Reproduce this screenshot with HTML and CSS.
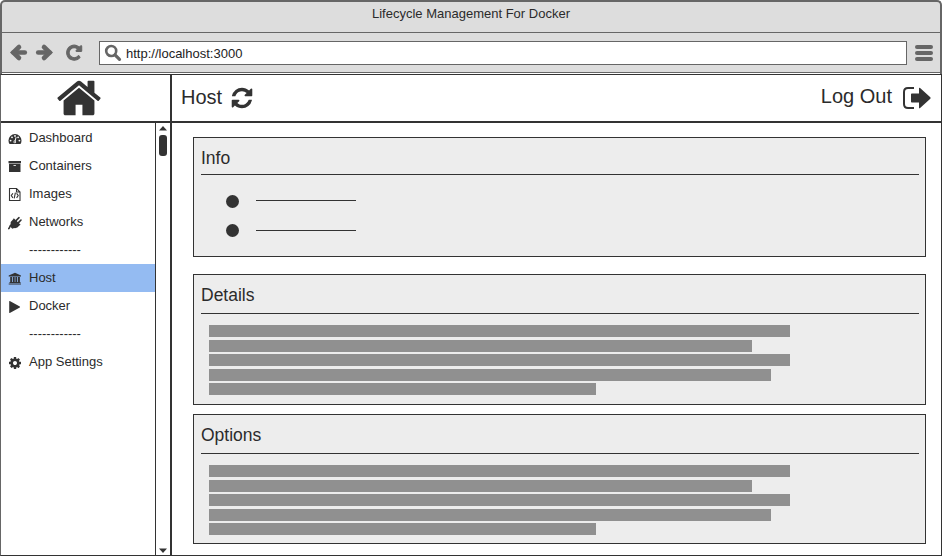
FILE: index.html
```html
<!DOCTYPE html>
<html lang="en">
<head>
<meta charset="utf-8">
<title>Lifecycle Management For Docker</title>
<link rel="stylesheet" href="styles.css">
</head>
<body>
<div class="window">
  <div class="chrome">
    <div class="titlebar">Lifecycle Management For Docker</div>
    <div class="toolbar">
      <svg class="nav-icons" width="90" height="24" viewBox="0 0 90 24">
        <g fill="none" stroke="#666" stroke-width="4.600">
          <path d="M11.500 11.500H22.800" stroke-linecap="round"/>
          <path d="M17 6L11.300 11.500L17 17" stroke-linecap="round"/>
          <path d="M36.200 11.500H47.500" stroke-linecap="round"/>
          <path d="M42 6L47.700 11.500L42 17" stroke-linecap="round"/>
        </g>
        <path transform="translate(63.4 2.9) scale(.0098)" fill="#666" stroke="#666" stroke-width="110" d="M1664 256v448q0 26-19 45t-45 19h-448q-42 0-59-40-17-39 14-69l138-138q-148-137-349-137-104 0-198.500 40.500t-163.500 109.500-109.500 163.500-40.500 198.500 40.500 198.500 109.500 163.500 163.500 109.500 198.500 40.500q119 0 225-52t179-147q7-10 23-12 15 0 25 9l137 138q9 8 9.500 20.500t-7.500 22.500q-109 132-264 204.500t-327 72.500q-156 0-298-61t-245-164-164-245-61-298 61-298 164-245 245-164 298-61q147 0 284.500 55.500t244.500 156.500l130-129q29-31 70-14 39 17 39 59z"/>
      </svg>
      <div class="address">
        <svg width="18" height="18" viewBox="0 0 18 18"><circle cx="7.200" cy="7" r="5" fill="none" stroke="#666" stroke-width="2.600"/><path d="M11 10.800L15.500 15.300" stroke="#666" stroke-width="3.200" stroke-linecap="round"/></svg>
        <span>http://localhost:3000</span>
      </div>
      <div class="burger"><i></i><i></i><i></i></div>
    </div>
  </div>
  <div class="app">
    <div class="side">
      <div class="logo">
        <svg width="48" height="48" viewBox="0 0 1792 1792"><path fill="#333" d="M1472 992v480q0 26-19 45t-45 19h-384v-384h-256v384h-384q-26 0-45-19t-19-45v-480q0-1 .5-3t.5-3l575-474 575 474q1 2 1 6zm223-69l-62 74q-8 9-21 11h-3q-13 0-21-7l-692-577-692 577q-12 8-24 7-13-2-21-11l-62-74q-8-10-7-23.500t11-21.500l719-599q32-26 76-26t76 26l244 204v-195q0-14 9-23t23-9h192q14 0 23 9t9 23v408l219 182q10 8 11 21.500t-7 23.500z"/></svg>
      </div>
      <div class="side-body">
        <ul class="menu">
          <li><svg width="14" height="14" viewBox="0 0 14 14"><path fill="#333" d="M.5 8.500a6.500 6.500 0 0 1 13 0q0 2-1 3.500h-11q-1-1.500-1-3.500z"/><g fill="#fff"><circle cx="2.600" cy="8.600" r=".9"/><circle cx="4" cy="5.300" r=".9"/><circle cx="7" cy="3.900" r=".9"/><circle cx="10.100" cy="5.300" r=".9"/><circle cx="11.400" cy="8.600" r=".9"/></g><path d="M6.800 9.800L8.100 5.200" stroke="#fff" stroke-width="1"/><circle cx="6.800" cy="9.900" r="1.300" fill="#fff"/><circle cx="6.800" cy="9.900" r=".6" fill="#333"/></svg>Dashboard</li>
          <li><svg width="14" height="14" viewBox="0 0 14 14"><path fill="#333" d="M.5 1h12.500v2.300H.5zM1 3.800h11.500v8.200H1z"/><path d="M5.500 5.500h2.400" stroke="#ddd" stroke-width="1"/></svg>Containers</li>
          <li><svg width="14" height="14" viewBox="0 0 14 14"><path fill="none" stroke="#333" d="M1.500 .5h7l3.500 3.500v8.500H1.500zM8.500 .5v3.500H12M4.900 5.300L3.300 7.600l1.600 2.300M8.600 5.300l1.600 2.300-1.600 2.300M7.400 4.600l-1.200 5.800" stroke-width="1.100"/></svg>Images</li>
          <li><svg width="14" height="14" viewBox="0 0 14 14"><g fill="none" stroke="#333" stroke-linecap="round"><path d="M8.300 4.300L11 1.700M10.500 6.600L13 4" stroke-width="1.600"/><path d="M4.500 9.200Q2.500 8.500 2 10.200T.7 12.600" stroke-width="1.500"/></g><path fill="#333" d="M5.800 2.300l6.800 6.500-1.200.8q-2.200 3-5.300 2.500l-1.800.6-2.200-2.200.5-2q-.2-3.200 2.400-4.900z"/></svg>Networks</li>
          <li class="sep">------------</li>
          <li class="active"><svg width="14" height="14" viewBox="0 0 14 14"><path fill="#333" d="M7 .8l6 2.700v.9H.7v-.9zM2.200 5h1.900v5H2.200zM4.900 5h1.800v5H4.900zM7.400 5h1.800v5H7.400zM10 5h1.900v5H10zM1.500 10h11v1h-11zM.7 11.500H13v1H.7z"/></svg>Host</li>
          <li><svg width="14" height="14" viewBox="0 0 14 14"><path fill="#333" d="M1.200 1.400q0-.6.6-.3l10 5.500q.6.400 0 .8l-10 5.500q-.6.300-.6-.3z"/></svg>Docker</li>
          <li class="sep">------------</li>
          <li><svg width="14" height="14" viewBox="0 0 1792 1792"><path fill="#333" d="M1152 896q0-106-75-181t-181-75-181 75-75 181 75 181 181 75 181-75 75-181zm512-109v222q0 12-8 23t-20 13l-185 28q-19 54-39 91 35 50 107 138 10 12 10 25t-9 23q-27 37-99 108t-94 71q-12 0-26-9l-138-108q-44 23-91 38-16 136-29 186-7 28-36 28h-222q-14 0-24.500-8.500t-11.500-21.500l-28-184q-49-16-90-37l-141 107q-10 9-25 9-14 0-25-11-126-114-165-168-7-10-7-23 0-12 8-23 15-21 51-66.500t54-70.500q-27-50-41-99l-183-27q-13-2-21-12.500t-8-23.500v-222q0-12 8-23t19-13l186-28q14-46 39-92-40-57-107-138-10-12-10-24 0-10 9-23 26-36 98.500-107.500t94.500-71.500q13 0 26 10l138 107q44-23 91-38 16-136 29-186 7-28 36-28h222q14 0 24.500 8.500t11.500 21.500l28 184q49 16 90 37l142-107q9-9 24-9 13 0 25 10 129 119 165 170 7 8 7 22 0 12-8 23-15 21-51 66.500t-54 70.500q26 50 41 98l183 28q13 2 21 12.500t8 23.500z"/></svg>App Settings</li>
        </ul>
        <div class="scroll">
          <svg width="8" height="5" viewBox="0 0 8 5"><path fill="#333" d="M0 4.500L4 0l4 4.500z"/></svg>
          <div class="thumb"></div>
          <svg class="down" width="8" height="5" viewBox="0 0 8 5"><path fill="#333" d="M0 .5h8l-4 4.500z"/></svg>
        </div>
      </div>
    </div>
    <div class="main">
      <header class="header">
        <span>Host</span>
        <svg class="refresh" width="24" height="24" viewBox="0 0 1792 1792"><path fill="#333" d="M1639 1056q0 5-1 7-64 268-268 434.500t-478 166.500q-146 0-282.500-55t-243.500-157l-129 129q-19 19-45 19t-45-19-19-45v-448q0-26 19-45t45-19h448q26 0 45 19t19 45-19 45l-137 137q71 66 161 102t187 36q134 0 250-65t186-179q11-17 53-117 8-23 30-23h192q13 0 22.500 9.500t9.500 22.500zm25-800v448q0 26-19 45t-45 19h-448q-26 0-45-19t-19-45 19-45l138-138q-148-137-349-137-134 0-250 65t-186 179q-11 17-53 117-8 23-30 23h-199q-13 0-22.500-9.500t-9.500-22.500v-7q65-268 270-434.500t480-166.500q146 0 284 55.500t245 156.500l130-129q19-19 45-19t45 19 19 45z"/></svg>
        <span class="logout">Log Out</span>
        <svg class="exit" width="30" height="24" viewBox="0 0 30 24"><path fill="none" stroke="#333" stroke-width="2" d="M12 2H6Q2 2 2 6v12q0 4 4 4h6"/><path fill="#333" d="M9 8.300q0-.8.800-.8H17V2.600q0-1.500 1.100-.5l10.200 9.200q.7.700 0 1.400l-10.200 9.200q-1.100 1-1.100-.5v-4.900H9.800q-.8 0-.8-.8z"/></svg>
      </header>
      <section class="panel info">
        <h2>Info</h2>
        <ul>
          <li><i></i><b></b></li>
          <li><i></i><b></b></li>
        </ul>
      </section>
      <section class="panel details">
        <h2>Details</h2>
        <div class="lines"><i class="full"></i><i class="mid"></i><i class="full"></i><i class="long"></i><i class="short"></i></div>
      </section>
      <section class="panel options">
        <h2>Options</h2>
        <div class="lines"><i class="full"></i><i class="mid"></i><i class="full"></i><i class="long"></i><i class="short"></i></div>
      </section>
    </div>
  </div>
</div>
</body>
</html>
```
FILE: styles.css
```css
* { box-sizing: border-box; }
body { margin: 0; background: #fff; color: #2b2b2b; font: 13px/16px "Liberation Sans", Arial, sans-serif; }
ul, h2 { margin: 0; padding: 0; list-style: none; font-weight: normal; }
svg { display: block; flex: none; }
.window { width: 942px; height: 556px; display: flex; flex-direction: column; overflow: hidden; }

.chrome { height: 74px; padding-bottom: 1px; flex: none; border: 2px solid #666; border-bottom: 0; border-radius: 5px 5px 0 0; background: linear-gradient(#ddd, #ddd) no-repeat 0 0 / 100% 71px; }
.titlebar { height: 31px; padding-top: 4px; border-bottom: 1px solid #666; text-align: center; }
.toolbar { height: 40px; display: flex; align-items: flex-start; padding-top: 8px; border-bottom: 1px solid #666; }
.nav-icons { margin-right: 7px; }
.address { width: 808px; height: 24px; display: flex; align-items: center; gap: 4px; padding: 1px 0 0 4px; border: 1px solid #666; background: #fff; color: #222; }
.address svg { margin-top: -2px; }
.address span { margin-top: 1px; }
.burger { display: flex; flex-direction: column; gap: 2px; margin: 4px 0 0 8px; }
.burger i { width: 18px; height: 4px; border-radius: 2px; background: #666; }

.app { flex: 1; display: flex; min-height: 0; border: 1px solid #333; border-left-color: #666; }
.side { width: 171px; display: flex; flex-direction: column; border-right: 2px solid #333; }
.logo { height: 48px; flex: none; padding-left: 54px; border-bottom: 2px solid #333; }
.logo svg { margin-top: -1px; }
.side-body { flex: 1; display: flex; }
.menu { flex: 1; padding-top: 1px; }
.menu li { height: 28px; display: flex; align-items: center; gap: 7px; padding: 0 0 0 7px; }
.menu svg { margin-top: 1px; }
.menu .sep { padding-left: 28px; }
.menu .active { background: #94bbf2; }
.scroll { width: 15px; display: flex; flex-direction: column; align-items: center; gap: 4px; padding: 3px 0 2px; border-left: 1px solid #333; }
.thumb { width: 8px; height: 21px; border-radius: 3px; background: #333; }
.down { margin-top: auto; }

.main { flex: 1; }
.header { height: 48px; display: flex; padding-left: 9px; border-bottom: 2px solid #333; font-size: 20px; line-height: 24px; }
.header span { margin-top: 10px; }
.refresh { margin: 11px 0 0 8px; }
.header .logout { margin: 9px 10px 0 auto; }
.exit { margin: 11px 9px 0 0; }

.panel { width: 733px; margin-left: 21px; padding: 0 6px 0 7px; border: 1px solid #333; background: #ededed; }
.panel h2 { height: 39px; padding-top: 10px; border-bottom: 1px solid #333; font-size: 17.500px; line-height: 20px; }
.info { height: 120px; margin-top: 14px; }
.info h2 { height: 37px; padding-top: 10px; }
.info ul { padding: 20px 0 0 25px; }
.info li { height: 30px; display: flex; align-items: flex-start; gap: 17px; }
.info li i { width: 13px; height: 13px; border-radius: 50%; background: #333; }
.info li b { width: 100px; height: 1px; margin-top: 5px; background: #333; }
.info li + li i { margin-top: -1px; }
.details { height: 131px; margin-top: 17px; }
.options { height: 130px; margin-top: 9px; }
.lines { display: flex; flex-direction: column; gap: 2.600px; padding: 11px 0 0 8px; }
.lines i { height: 12px; background: #909090; }
.full { width: 581px; }
.mid { width: 543px; }
.long { width: 562px; }
.short { width: 387px; }
```
